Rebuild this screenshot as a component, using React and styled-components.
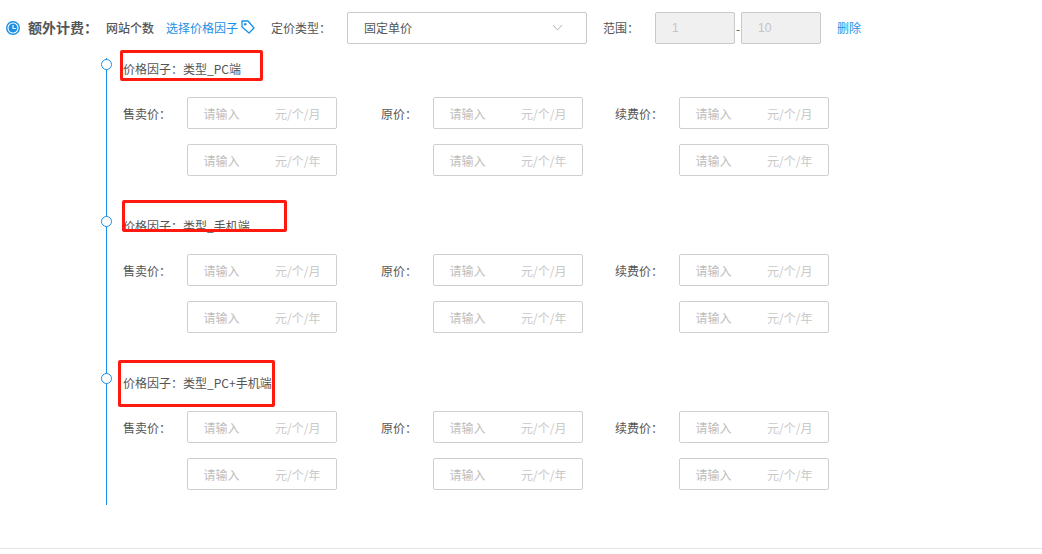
import React from 'react';
import styled, { createGlobalStyle } from 'styled-components';

const GlobalStyle = createGlobalStyle`
  html, body {
    margin: 0;
    padding: 0;
    background: #fff;
  }
  body {
    font-family: "Noto Sans CJK SC", "Liberation Sans", sans-serif;
    font-size: 12px;
    color: #555;
  }
`;

const Page = styled.div`
  width: 1042px;
  height: 554px;
  box-sizing: border-box;
  padding: 12px 0 0 6px;
  overflow: hidden;
  position: relative;
`;

const Header = styled.div`
  display: flex;
  align-items: center;
  height: 32px;
`;

const ClockIcon = styled.svg`
  width: 14px;
  height: 14px;
  flex: none;
`;

const Title = styled.span`
  margin-left: 8px;
  padding-bottom: 2px;
  width: 78px;
  font-size: 14px;
  font-weight: 700;
  color: #555;
`;

const Strong = styled.span`
  width: 60px;
  padding-bottom: 2px;
  font-weight: 500;
  color: #555;
`;

const LinkText = styled.a`
  padding-bottom: 2px;
  color: #1b8fe6;
  white-space: nowrap;
`;

const TagIcon = styled.svg`
  width: 14px;
  height: 14px;
  margin-left: 3px;
  margin-bottom: 3px;
  flex: none;
`;

const HeaderLabel = styled.span`
  margin-left: ${(props) => props.$gap}px;
  padding-bottom: 2px;
  width: ${(props) => props.$width}px;
  color: #555;
  white-space: nowrap;
`;

const Select = styled.div`
  width: 240px;
  height: 32px;
  box-sizing: border-box;
  border: 1px solid #c9c9c9;
  border-radius: 2px;
  padding: 0 23px 2px 16px;
  display: flex;
  align-items: center;
  justify-content: space-between;
  color: #555;
`;

const Chevron = styled.svg`
  width: 11px;
  height: 7px;
`;

const RangeInput = styled.div`
  width: 80px;
  height: 32px;
  box-sizing: border-box;
  border: 1px solid #c9c9c9;
  border-radius: 2px;
  background: #f0f0f0;
  padding-left: 16px;
  display: flex;
  align-items: center;
  color: #c4c4c4;
  font-family: "Liberation Sans", sans-serif;
`;

const Dash = styled.span`
  width: 6px;
  text-align: center;
  color: #555;
`;

const DeleteLink = styled(LinkText)`
  margin-left: 16px;
`;

const Timeline = styled.div`
  margin: 14px 0 0 100px;
  width: 800px;
  height: 447px;
  box-sizing: border-box;
  border-left: 1px solid #1a90e6;
  padding-left: 16px;
`;

const Group = styled.section`
  position: relative;
  height: 157px;
  box-sizing: border-box;
  padding-top: 1px;
`;

const Dot = styled.span`
  position: absolute;
  left: -22px;
  top: 1px;
  width: 11px;
  height: 11px;
  box-sizing: border-box;
  border: 1.5px solid #1a90e6;
  border-radius: 50%;
  background: #fff;
`;

const Factor = styled.div`
  height: 20px;
  line-height: 20px;
  color: #555;
  white-space: nowrap;
`;

const Marker = styled.span`
  position: absolute;
  left: ${(props) => props.$left}px;
  top: ${(props) => props.$top}px;
  width: ${(props) => props.$width}px;
  height: ${(props) => props.$height}px;
  box-sizing: border-box;
  border: 3px solid #ff1a10;
  border-radius: 2px;
`;

const PriceGrid = styled.div`
  margin-top: 18px;
  display: grid;
  grid-template-columns: 64px 150px 96px 150px 96px 150px;
  grid-auto-rows: 32px;
  row-gap: 15px;
  align-items: center;
`;

const PriceLabel = styled.span`
  color: #555;
  white-space: nowrap;
  text-align: ${(props) => (props.$first ? 'left' : 'right')};
  padding-right: ${(props) => (props.$first ? 0 : 16)}px;
`;

const PriceInput = styled.div`
  height: 32px;
  box-sizing: border-box;
  border: 1px solid #cfcfcf;
  border-radius: 2px;
  padding: 0 15.5px;
  display: flex;
  align-items: center;
  justify-content: space-between;
  color: #bdbdbd;
`;

const Unit = styled.span`
  color: #c9c9c9;
`;

const Footer = styled.div`
  position: absolute;
  left: 0;
  right: 0;
  top: 548px;
  border-top: 1px solid #e6e6e6;
`;

const groups = [
  { name: '类型_PC端', marker: { left: -3, top: -8, width: 143, height: 31 } },
  { name: '类型_手机端', marker: { left: -1, top: -15, width: 165, height: 32 } },
  { name: '类型_PC+手机端', marker: { left: -5, top: -12, width: 157, height: 47 } },
];

const prices = [
  ['售卖价：', '原价：', '续费价：', '元/个/月'],
  ['', '', '', '元/个/年'],
];

function App() {
  return (
    <>
      <GlobalStyle />
      <Page>
        <Header>
          <ClockIcon viewBox="0 0 14 14">
            <circle cx="7" cy="7" r="7" fill="#1a90e6" />
            <circle cx="7" cy="7" r="5" fill="none" stroke="#fff" strokeWidth="1.1" />
            <path d="M7 4V7.5H10.2" fill="none" stroke="#fff" strokeWidth="1.1" />
          </ClockIcon>
          <Title>额外计费：</Title>
          <Strong>网站个数</Strong>
          <LinkText>选择价格因子</LinkText>
          <TagIcon viewBox="0 0 14 14">
            <path d="M1 1H7L13 8L8 13L1 7Z" fill="none" stroke="#1a90e6" strokeWidth="1.3" strokeLinejoin="round" />
            <circle cx="4.2" cy="4.2" r="1.3" fill="#1a90e6" />
          </TagIcon>
          <HeaderLabel $gap={16} $width={76}>定价类型：</HeaderLabel>
          <Select>
            固定单价
            <Chevron viewBox="0 0 11 7">
              <path d="M1 1L5.5 6L10 1" fill="none" stroke="#b5b5b5" strokeWidth="1" />
            </Chevron>
          </Select>
          <HeaderLabel $gap={16} $width={52}>范围：</HeaderLabel>
          <RangeInput>1</RangeInput>
          <Dash>-</Dash>
          <RangeInput>10</RangeInput>
          <DeleteLink>删除</DeleteLink>
        </Header>
        <Timeline>
          {groups.map((group) => (
            <Group key={group.name}>
              <Dot />
              <Marker
                $left={group.marker.left}
                $top={group.marker.top}
                $width={group.marker.width}
                $height={group.marker.height}
              />
              <Factor>价格因子：{group.name}</Factor>
              <PriceGrid>
                {prices.map(([sale, origin, renew, unit]) => (
                  <React.Fragment key={unit}>
                    {[sale, origin, renew].map((label, index) => (
                      <React.Fragment key={`${unit}-${index}`}>
                        <PriceLabel $first={index === 0}>{label}</PriceLabel>
                        <PriceInput>
                          请输入
                          <Unit>{unit}</Unit>
                        </PriceInput>
                      </React.Fragment>
                    ))}
                  </React.Fragment>
                ))}
              </PriceGrid>
            </Group>
          ))}
        </Timeline>
        <Footer />
      </Page>
    </>
  );
}

export default App;
